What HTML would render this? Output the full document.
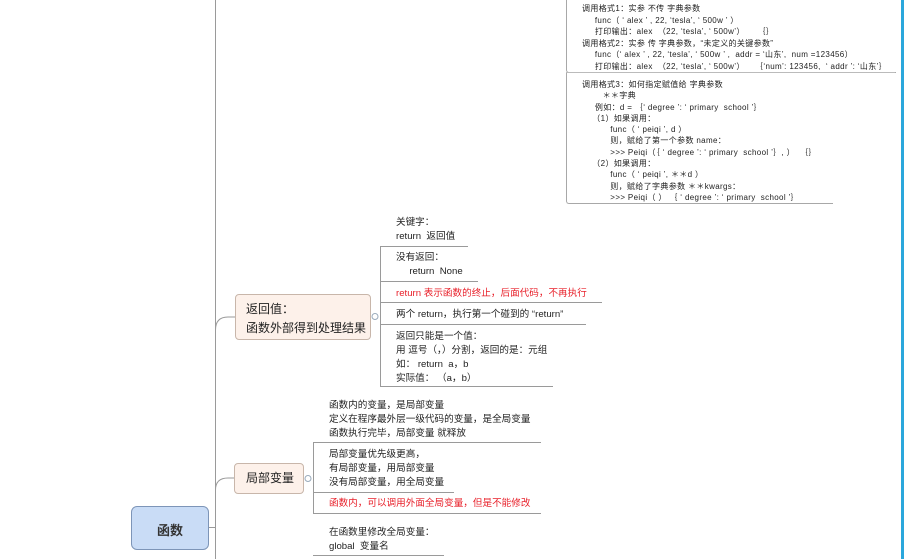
<!DOCTYPE html>
<html><head><meta charset="utf-8"><style>
body{margin:0;width:906px;height:559px;overflow:hidden;background:#fff;position:relative;font-family:"Liberation Sans","Noto Sans CJK SC",sans-serif;color:#222}
.a{position:absolute;white-space:nowrap}
.l{position:absolute;background:#9a9a9a}
.s{font-size:8px;line-height:11.5px;letter-spacing:0.35px}
.m{font-size:9.6px;line-height:14px}
.r{color:#e8202a}
</style></head><body>
<div class="l" style="left:215px;top:0;width:1px;height:559px"></div>
<div class="l" style="left:901px;top:0;width:3px;height:559px;background:#2aa7dc"></div>

<div class="a" style="left:566px;top:-3px;width:329px;height:75px;border:1px solid #a8a8a8;border-top:none;border-right:none;border-radius:0 0 0 3px"></div>
<div class="l" style="left:566px;top:72px;width:329px;height:1px;background:#bbb"></div>
<div class="a" style="left:566px;top:73px;width:266px;height:130px;border-left:1px solid #a8a8a8;border-bottom:1px solid #a8a8a8;border-radius:0 0 0 3px"></div>
<div class="a s" style="left:582px;top:3px">调用格式1：实参 不传 字典参数<br>&nbsp;&nbsp;&nbsp;&nbsp;&nbsp;func（ ‘ alex ’ , 22, ‘tesla’, ‘ 500w ’ ）<br>&nbsp;&nbsp;&nbsp;&nbsp;&nbsp;打印输出：alex &nbsp;（22, ‘tesla’, ‘ 500w’） &nbsp;&nbsp;&nbsp;&nbsp;｛｝<br>调用格式2：实参 传 字典参数，“未定义的关键参数”<br>&nbsp;&nbsp;&nbsp;&nbsp;&nbsp;func（‘ alex ’ , 22, ‘tesla’, ‘ 500w ’ , &nbsp;addr = ‘山东’, &nbsp;num =123456）<br>&nbsp;&nbsp;&nbsp;&nbsp;&nbsp;打印输出：alex &nbsp;（22, ‘tesla’, ‘ 500w’） &nbsp;&nbsp;&nbsp;｛‘num’: 123456, &nbsp;‘ addr ’: ‘山东’｝</div>
<div class="a s" style="left:582px;top:79px;line-height:11.3px">调用格式3：如何指定赋值给 字典参数<br>&nbsp;&nbsp;&nbsp;&nbsp;&nbsp;&nbsp;&nbsp;&nbsp;＊＊字典<br>&nbsp;&nbsp;&nbsp;&nbsp;&nbsp;例如：d = ｛‘ degree ’: ‘ primary &nbsp;school ’｝<br>&nbsp;&nbsp;&nbsp;&nbsp;（1）如果调用：<br>&nbsp;&nbsp;&nbsp;&nbsp;&nbsp;&nbsp;&nbsp;&nbsp;&nbsp;&nbsp;&nbsp;func（ ‘ peiqi ’, d ）<br>&nbsp;&nbsp;&nbsp;&nbsp;&nbsp;&nbsp;&nbsp;&nbsp;&nbsp;&nbsp;&nbsp;则，赋给了第一个参数 name：<br>&nbsp;&nbsp;&nbsp;&nbsp;&nbsp;&nbsp;&nbsp;&nbsp;&nbsp;&nbsp;&nbsp;&gt;&gt;&gt; Peiqi（｛ ‘ degree ’: ‘ primary &nbsp;school ’｝, ） &nbsp;｛｝<br>&nbsp;&nbsp;&nbsp;&nbsp;（2）如果调用：<br>&nbsp;&nbsp;&nbsp;&nbsp;&nbsp;&nbsp;&nbsp;&nbsp;&nbsp;&nbsp;&nbsp;func（ ‘ peiqi ’, ＊＊d ）<br>&nbsp;&nbsp;&nbsp;&nbsp;&nbsp;&nbsp;&nbsp;&nbsp;&nbsp;&nbsp;&nbsp;则，赋给了字典参数 ＊＊kwargs：<br>&nbsp;&nbsp;&nbsp;&nbsp;&nbsp;&nbsp;&nbsp;&nbsp;&nbsp;&nbsp;&nbsp;&gt;&gt;&gt; Peiqi（ ） ｛ ‘ degree ’: ‘ primary &nbsp;school ’｝</div>

<svg class="a" style="left:0;top:0" width="906" height="559"><g fill="none" stroke="#9a9a9a" stroke-width="1">
<path d="M215.5 330 Q215.5 317 228 317 H235"/>
<path d="M215.5 490 Q215.5 478 228 478 H234"/>
<path d="M208 527.5 H215"/>
<circle cx="375" cy="316.5" r="3" stroke="#9ab"/>
<circle cx="308" cy="478.5" r="3" stroke="#9ab"/>
</g></svg>

<div class="a" style="left:235px;top:294px;width:134px;height:44px;background:#fdf1ea;border:1px solid #c8b6aa;border-radius:4px"></div>
<div class="a" style="left:246px;top:300px;font-size:12px;line-height:19px">返回值：<br>函数外部得到处理结果</div>

<div class="l" style="left:380px;top:246px;width:1px;height:140px"></div>
<div class="l" style="left:380px;top:246px;width:88px;height:1px"></div>
<div class="l" style="left:380px;top:281px;width:98px;height:1px"></div>
<div class="l" style="left:380px;top:302px;width:222px;height:1px"></div>
<div class="l" style="left:380px;top:324px;width:206px;height:1px"></div>
<div class="l" style="left:380px;top:386px;width:173px;height:1px"></div>
<div class="a m" style="left:396px;top:216px">关键字：<br>return &nbsp;返回值</div>
<div class="a m" style="left:396px;top:251px">没有返回：<br>&nbsp;&nbsp;&nbsp;&nbsp;&nbsp;return &nbsp;None</div>
<div class="a m r" style="left:396px;top:287px">return 表示函数的终止，后面代码，不再执行</div>
<div class="a m" style="left:396px;top:308px">两个 return，执行第一个碰到的 “return”</div>
<div class="a m" style="left:396px;top:330px">返回只能是一个值：<br>用 逗号（，）分割，返回的是：元组<br>如： return &nbsp;a，b<br>实际值： （a，b）</div>

<div class="a" style="left:234px;top:463px;width:68px;height:29px;background:#fdf1ea;border:1px solid #c8b6aa;border-radius:4px"></div>
<div class="a" style="left:246px;top:471px;font-size:12px;line-height:15px">局部变量</div>

<div class="l" style="left:313px;top:442px;width:1px;height:71px"></div>
<div class="l" style="left:313px;top:442px;width:228px;height:1px"></div>
<div class="l" style="left:313px;top:492px;width:141px;height:1px"></div>
<div class="l" style="left:313px;top:513px;width:228px;height:1px"></div>
<div class="l" style="left:313px;top:555px;width:131px;height:1px"></div>
<div class="a m" style="left:329px;top:399px">函数内的变量，是局部变量<br>定义在程序最外层一级代码的变量，是全局变量<br>函数执行完毕，局部变量 就释放</div>
<div class="a m" style="left:329px;top:448px">局部变量优先级更高，<br>有局部变量，用局部变量<br>没有局部变量，用全局变量</div>
<div class="a m r" style="left:329px;top:497px">函数内，可以调用外面全局变量，但是不能修改</div>
<div class="a m" style="left:329px;top:526px">在函数里修改全局变量：<br>global &nbsp;变量名</div>

<div class="a" style="left:131px;top:506px;width:76px;height:42px;background:#c9dcf6;border:1px solid #7d95b8;border-radius:6px"></div>
<div class="a" style="left:131px;top:520px;width:78px;text-align:center;font-size:13px;font-weight:bold;color:#333">函数</div>
</body></html>
